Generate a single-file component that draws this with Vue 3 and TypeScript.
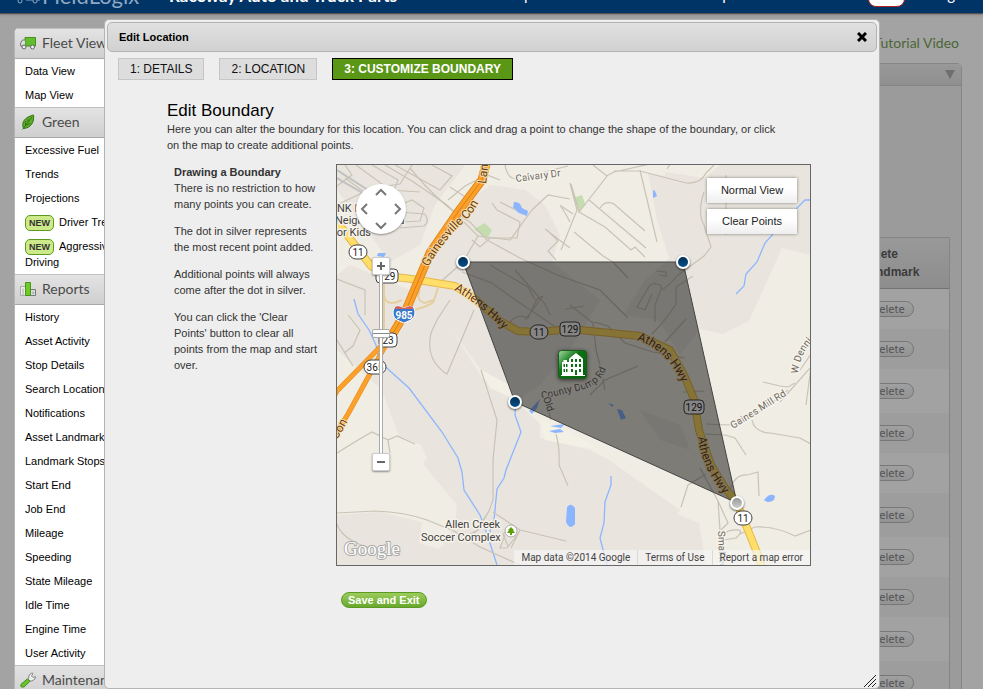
<script setup lang="ts">
import { ref } from 'vue'

interface MenuItem { label: string; isNew?: boolean }
interface MenuGroup { title: string; icon: 'truck' | 'leaf' | 'chart' | 'wrench'; items: MenuItem[] }
interface Shield { x: number; y: number; text: string; us?: boolean }

const plain = (...labels: string[]): MenuItem[] => labels.map((label) => ({ label }))

const groups: MenuGroup[] = [
  { title: 'Fleet View', icon: 'truck', items: plain('Data View', 'Map View') },
  {
    title: 'Green',
    icon: 'leaf',
    items: [
      ...plain('Excessive Fuel', 'Trends', 'Projections'),
      { label: 'Driver Trends', isNew: true },
      { label: 'Aggressive Driving', isNew: true },
    ],
  },
  {
    title: 'Reports',
    icon: 'chart',
    items: plain(
      'History', 'Asset Activity', 'Stop Details', 'Search Locations', 'Notifications',
      'Asset Landmarks', 'Landmark Stops', 'Start End', 'Job End', 'Mileage', 'Speeding',
      'State Mileage', 'Idle Time', 'Engine Time', 'User Activity',
    ),
  },
  { title: 'Maintenance', icon: 'wrench', items: [] },
]

const tabs = ['1: DETAILS', '2: LOCATION', '3: CUSTOMIZE BOUNDARY']
const activeTab = ref(2)
const zoomLevel = ref(68)

const boundary = [
  { x: 463, y: 262 },
  { x: 683, y: 262 },
  { x: 737, y: 503 },
  { x: 515, y: 402 },
]
const lastAdded = 2
const boundaryPoints = boundary.map((p) => `${p.x},${p.y}`).join(' ')

const shields: Shield[] = [
  { x: 358, y: 252, text: '11' },
  { x: 387, y: 276, text: '129', us: true },
  { x: 388, y: 340, text: '23', us: true },
  { x: 375, y: 367, text: '365' },
  { x: 743, y: 518, text: '11' },
]
const coveredShields: Shield[] = [
  { x: 539, y: 332, text: '11' },
  { x: 570, y: 329, text: '129', us: true },
  { x: 694, y: 407, text: '129', us: true },
]

const minorRoads = [
  'M337 186L352 175L345 165M337 205L372 188L400 184L412 165M345 178L375 200M356 165L390 190L420 192M372 165L398 180L392 196M395 165L440 190L452 176L432 165',
  'M400 205L412 200L424 208L420 221L402 222M398 212L425 214Q430 222 424 226L400 228M410 168Q440 205 470 222L487 240L520 258L560 276L600 290L628 318',
  'M385 165L412 181L447 205L478 236L463 262L438 284M448 200L465 186L487 175L500 180M450 187L470 200L455 215',
  'M492 203L497 210L520 222L517 238L490 238L480 247L472 240M500 202L516 210M505 165Q508 182 520 178L568 166',
  'M570 199L548 195L532 210L510 240L478 236M560 205Q566 214 570 222M547 230L558 241L548 251L556 260M545 229L570 248',
  'M570 183L577 210L561 250M571 184Q576 200 579 212L608 175L614 172L650 164M607 176L593 165M614 171L640 171L686 183Q701 184 706 173L714 165',
  'M640 170L657 242M667 169L673 160M589 200L646 248M600 208Q605 200 614 204L645 231M579 212L605 227L631 250L635 247L645 257M574 232L603 256L613 262L628 278M573 214L561 206',
  'M704 192Q697 213 704 225L711 247L704 256L677 276Q671 284 662 290M726 175V235',
  'M462 272L492 283L514 299L560 330M490 265L528 287L535 300M515 270L545 304L550 315M510 322Q518 313 528 318L537 299L543 296L525 320M565 309L584 306M570 305L593 323L596 350L600 365L605 390',
  'M656 271L666 272L666 276L659 275M656 283L650 285L637 307L645 310L652 294M655 284Q664 284 660 292L655 305L655 322M693 276L676 287L676 304Q666 320 652 334M686 319L665 342M594 322L608 326L625 343L653 352L685 358',
  'M450 300L437 320L431 333Q425 360 447 374L474 310M481 370L497 420L493 460V500L489 511L478 530L468 535M493 512L520 530L566 541M489 511L470 540',
  'M337 453L358 440L372 432L388 440L390 453M388 440L397 436L415 444M337 513L375 511Q405 512 427 520L454 531L480 547L520 565M337 524Q342 540 370 548',
  'M505 535L500 548L507 548L517 535M513 528L503 534L508 546M520 530L511 548M337 340L353 366M337 279L365 290L365 315M348 315L360 330L353 346L344 353',
  'M556 434Q560 448 559 465L568 486M548 408L551 420M550 395L549 403M590 395L605 380L638 366',
  'M706 424L729 425M706 434L725 435L735 438L746 455M752 420Q754 432 770 433L800 438L811 444M763 382L780 386L788 387L795 383M681 507L688 485L706 474',
  'M700 468L718 501L728 523L721 530M718 501L720 530L724 565M730 490Q735 474 747 475L758 472L759 496M740 534L755 527Q775 526 795 536L811 530M724 540L736 538Q748 527 728 531L722 536',
  'M683 392L704 391M811 354L800 370M780 402L811 367L806 405M788 390L778 398L754 416L729 425',
]
</script>

<template>
  <div class="page">
    <header class="topbar">
      <span class="brand">
        <svg class="brand-truck" viewBox="0 0 28 14" aria-hidden="true">
          <path d="M1 10V2H8M10 10V0H26V10H23M19 10H12" /><circle cx="6" cy="11" r="2" /><circle cx="21" cy="11" r="2" />
        </svg>
        <span class="brand-name">FieldLogix</span>
      </span>
      <strong class="company">Raceway Auto and Truck Parts</strong>
      <a class="toplink map-link" href="#">Map</a>
      <a class="toplink help" href="#">Help</a>
      <span class="alerts"></span>
      <a class="toplink" href="#">Log</a>
    </header>

    <div class="body">
      <nav class="sidebar" aria-label="Main menu">
        <section v-for="group in groups" :key="group.title">
          <h2 class="group-title">
            <svg v-if="group.icon === 'truck'" class="icon" viewBox="0 0 16 16" aria-hidden="true">
              <path d="M5 2.5H15.5V11H5Z" fill="#63bd2e" stroke="#479019" />
              <path d="M5 5H2.5L.6 8V11H5" fill="#ddd" stroke="#777" />
              <circle cx="4" cy="12" r="2" fill="#eee" stroke="#666" /><circle cx="12.5" cy="12" r="2" fill="#eee" stroke="#666" />
            </svg>
            <svg v-else-if="group.icon === 'leaf'" class="icon" viewBox="0 0 16 16" aria-hidden="true">
              <path d="M13.500 1C14.500 8 11 14 3.500 14.500C1 8 5 3 13.500 1Z" fill="#5fac2b" stroke="#347716" />
              <path d="M2.500 15.500L12 3M5.500 11V7M6 11L10.500 9.500M8 8V5" fill="none" stroke="#2b6814" stroke-width=".8" />
            </svg>
            <svg v-else-if="group.icon === 'chart'" class="icon" viewBox="0 0 16 16" aria-hidden="true">
              <path d="M.5 5.5H5.500V14.500H.5Z" fill="#eee" stroke="#aaa" />
              <path d="M2 7.500H4V14H2Z" fill="#ccc" />
              <path d="M10.500 8.500H15.500V14.500H10.500Z" fill="#ddd" stroke="#777" />
              <path d="M12.500 10.500H14V13H12.500Z" fill="#aaa" />
              <path d="M5.500 1.500H10.500V14.500H5.500Z" fill="#6dcb27" stroke="#4b941b" />
            </svg>
            <svg v-else class="icon" viewBox="0 0 16 16" aria-hidden="true">
              <path d="M8.500 7.500L9 3L12 .8L13 1.500L11.500 4L13 5.500L15.400 4.500L15 7L12 9L9 8.800Z" fill="#eee" stroke="#888" />
              <path d="M7.500 6.800L10 9.300L4 15L1.200 15L.8 12.500Z" fill="#65c42b" stroke="#478f1d" />
            </svg>
            {{ group.title }}
          </h2>
          <ul v-if="group.items.length" class="menu">
            <li v-for="item in group.items" :key="item.label">
              <a href="#"><span v-if="item.isNew" class="new">NEW</span>{{ item.label }}</a>
            </li>
          </ul>
        </section>
      </nav>

      <main class="backdrop">
        <a class="tutorial" href="#">Tutorial Video</a>
        <section class="panel">
          <div class="panel-head"><span class="caret"></span></div>
          <div class="panel-body">
            <table class="landmarks">
              <thead>
                <tr><th></th><th class="del-col">Delete Landmark</th></tr>
              </thead>
              <tbody>
                <tr v-for="n in 10" :key="n">
                  <td></td>
                  <td><button type="button" class="delete">Delete</button></td>
                </tr>
              </tbody>
            </table>
          </div>
        </section>
      </main>
    </div>

    <div class="dialog" role="dialog" aria-labelledby="dialog-title">
      <div class="titlebar">
        <h1 id="dialog-title">Edit Location</h1>
        <button type="button" class="close" aria-label="Close">
          <svg viewBox="0 0 10 10"><path d="M1 1L9 9M9 1L1 9" /></svg>
        </button>
      </div>
      <div class="tabs">
        <button
          v-for="(tab, i) in tabs"
          :key="tab"
          type="button"
          class="tab"
          :class="{ active: i === activeTab }"
          @click="activeTab = i"
        >{{ tab }}</button>
      </div>
      <div class="content">
        <h2 class="heading">Edit Boundary</h2>
        <p class="intro">
          Here you can alter the boundary for this location. You can click and drag a point to change the shape of the boundary, or click<br />
          on the map to create additional points.
        </p>
        <div class="editor">
          <div class="help-text">
            <p><strong>Drawing a Boundary</strong><br />There is no restriction to how many points you can create.</p>
            <p>The dot in silver represents the most recent point added.</p>
            <p>Additional points will always come after the dot in silver.</p>
            <p>You can click the 'Clear Points' button to clear all points from the map and start over.</p>
          </div>
          <div class="map-col">
            <div class="map">
              <svg class="map-art" viewBox="337 165 473 400" preserveAspectRatio="xMidYMid slice" aria-label="Map">
                <defs>
                  <path id="p-gaines" d="M428 267Q445 238 467 219Q479 207 485 186" />
                  <path id="p-lanier" d="M486 184L490 150" />
                  <path id="p-con" d="M337 440L356 407" />
                  <path id="p-ath1" d="M454 290Q478 303 504 330" />
                  <path id="p-ath2" d="M637 340Q668 350 683 386" />
                  <path id="p-ath3" d="M698 437Q701 468 727 498" />
                  <path id="p-county" d="M542 399L577 391Q602 386 607 365" />
                  <path id="p-gmill" d="M733 429L800 387" />
                  <path id="p-denn" d="M798 374Q800 350 820 334" />
                  <path id="p-calv" d="M516 182L570 175" />
                  <linearGradient id="dot" x2="0" y2="1"><stop stop-color="#003057" /><stop offset="1" stop-color="#07508a" /></linearGradient>
                  <linearGradient id="dot-last" x2="0" y2="1"><stop stop-color="#999" /><stop offset="1" stop-color="#ccc" /></linearGradient>
                  <linearGradient id="pin" x2="1" y2="1"><stop stop-color="#a5dba5" /><stop offset=".4" stop-color="#0c7413" /><stop offset="1" stop-color="#075d10" /></linearGradient>
                </defs>

                <path d="M337 165H810V565H337Z" fill="#f0ede4" />
                <g fill="#e9e5de">
                  <path d="M337 165H465L435 205L420 245L390 262L337 190Z" />
                  <path d="M450 215L490 185L525 190L545 205L560 235L552 262L600 300L570 350L540 385L515 402L481 370L452 330L430 350L404 330L425 270Z" />
                  <path d="M648 173L665 176V172L705 178L720 165H810V255L782 248L749 321L723 334L700 329L680 355L658 320L623 315L645 280L669 258L657 220Z" />
                  <path d="M337 275L350 265L410 290L430 320L452 330L482 378L520 405L540 424V438L590 450L609 460L680 510L677 514L699 523L706 565H337V515L380 512L422 522L419 543L438 549L445 545L438 540L454 530L457 505L423 464L427 458L421 445L399 436L382 390L337 350Z" />
                  <path d="M640 410L680 425L690 450L660 440Z" />
                </g>
                <path d="M481 370L510 385L516 400L490 388Z M540 420L570 432L600 450L545 440Z" fill="#f3f0e6" />
                <path d="M474 229L485 223L492 230L487 239Z M573 198L582 195L585 204L580 211Z" fill="#c5dcae" />
                <g fill="#8bb6ff">
                  <path d="M514 202Q520 201 522 208L528 211L527 216L519 213L513 208Z" />
                  <path d="M653 190L655 191L657 196L653 198Z" />
                  <path d="M378 253H386L384 257L377 256Z" />
                  <path d="M764 500Q770 492 775 496L774 500Q768 504 764 500Z" />
                  <path d="M567 507Q571 502 575 508V524Q570 531 566 522Z" />
                  <path d="M529 411L540 399L537 408L532 414Z" />
                  <path d="M550 426L565 424L561 428ZM549 431L560 429L564 432L555 433Z" />
                  <path d="M608 403L614 405L612 407ZM617 409L622 410L626 418L621 420Z" />
                </g>
                <path d="M354 299L358 314L369 330L376 345L379 360L390 371L409 388L442 432L458 458L462 472L464 490L480 515L487 534L497 565M516 395L515 415L521 432L506 470L504 478L497 489L494 520L488 537M611 476L611 485L605 502L604 523L600 538L607 565M811 200H805L796 209M773 234L765 243L757 262L746 274L744 286L736 294" class="river" />
                <g class="roads"><path v-for="d in minorRoads" :key="d" :d="d" /></g>
                <path d="M384 285V294Q385 308 402 300M420 290Q415 300 425 303L434 300L438 288M434 300Q433 305 417 309L395 321" class="ramp" />
                <path d="M384 283L384 330" class="ramp" />

                <path d="M337 170L371 192M337 178L366 195" stroke="#bfc0c0" stroke-width="2" />
                <path d="M335 219L354 244L371 266L386 276L412 279L455 286L475 299L500 321L518 331L540 332L570 329L640 336L670 350L684 375L694 399L699 430L711 465L725 488L737 503L758 555L762 568" class="highway-edge" />
                <path d="M335 219L354 244L371 266L386 276L412 279L455 286L475 299L500 321L518 331L540 332L570 329L640 336L670 350L684 375L694 399L699 430L711 465L725 488L737 503L758 555L762 568" class="highway" />
                <path d="M389 339L371 372L348 414L333 438M386 341L337 391L327 410" class="freeway-edge thin" />
                <path d="M389 339L371 372L348 414L333 438M386 341L337 391L327 410" class="freeway thin" />
                <path d="M487 160L482 180L458 212L430 253L404 315L386 345" class="freeway-edge" />
                <path d="M487 160L482 180L458 212L430 253L404 315L386 345" class="freeway" />
                <path d="M487 160L482 180L458 212L430 253L404 315L386 345" fill="none" stroke="#dd7d15" />

                <g class="road-name hwy-name">
                  <text><textPath href="#p-gaines">Gainesville Con</textPath></text>
                  <text><textPath href="#p-lanier">Lanier</textPath></text>
                  <text><textPath href="#p-con">Con</textPath></text>
                  <text><textPath href="#p-ath1">Athens Hwy</textPath></text>
                  <text><textPath href="#p-ath2">Athens Hwy</textPath></text>
                  <text><textPath href="#p-ath3">Athens Hwy</textPath></text>
                </g>
                <g class="road-name">
                  <text><textPath href="#p-county">County Dump Rd</textPath></text>
                  <text transform="translate(543 398) rotate(72)">Old</text>
                  <text><textPath href="#p-gmill">Gaines Mill Rd</textPath></text>
                  <text><textPath href="#p-denn">W Dennis</textPath></text>
                  <text><textPath href="#p-calv">Calvary Dr</textPath></text>
                  <text transform="translate(718 531) rotate(88)">Smallwood</text>
                </g>
                <g class="place">
                  <text x="337" y="212">NK Interactive</text>
                  <text x="335" y="224">Neighborhood</text>
                  <text x="333" y="236">for Kids</text>
                  <text x="445" y="528">Allen Creek</text>
                  <text x="421" y="541">Soccer Complex</text>
                </g>
                <circle cx="511" cy="531" r="6" fill="#fff" stroke="#aaa" />
                <path d="M511 527L514 530L513 530L515 533H512V535H510V533H507L509 530H508Z" fill="#5e9e08" />

                <g v-for="s in coveredShields" :key="`${s.x}`" class="shield">
                  <rect :x="s.x - (s.us ? 10 : 9)" :y="s.y - 7" :width="s.us ? 20 : 18" height="14" :rx="s.us ? 4 : 7" />
                  <text :x="s.x" :y="s.y + 4">{{ s.text }}</text>
                </g>

                <polygon :points="boundaryPoints" class="boundary" />

                <g v-for="s in shields" :key="`${s.x}-${s.y}`" class="shield">
                  <rect :x="s.x - (s.text.length > 2 ? 11 : 9)" :y="s.y - 7" :width="s.text.length > 2 ? 22 : 18" height="14" :rx="s.us ? 4 : 7" />
                  <text :x="s.x" :y="s.y + 4">{{ s.text }}</text>
                </g>
                <path d="M394 308L398 306L404 308L410 306L414 308Q417 316 411 320L404 323L397 320Q391 316 394 308Z" fill="#3a78c9" stroke="#fff" />
                <path d="M395 307L398 306L404 308L410 306L413 307V309H395Z" fill="#d5605a" />
                <text x="404" y="319" class="interstate">985</text>

                <g class="pin">
                  <rect x="558.500" y="350.500" width="28" height="28" rx="3" />
                  <path d="M562 375V362H563.500V360H567V362H569V359L571 357L576 353L581 357L583 359V375H585V376H561V375Z" fill="#fff" />
                  <path d="M563.500 364H565V367H563.500ZM566 364H567.500V367H566ZM563.500 369H565V372H563.500ZM566 369H567.500V372H566ZM571 359H573V362H571ZM575 359H577V362H575ZM579 359H581V362H579ZM571 364H573V367H571ZM575 364H577V367H575ZM579 364H581V367H579ZM571 369H573V372H571ZM575 370H577V375H575ZM579 369H581V372H579Z" fill="#0b6d14" />
                </g>

                <g v-for="(p, i) in boundary" :key="i" class="vertex">
                  <circle :cx="p.x" :cy="p.y" r="7" fill="#fff" />
                  <circle :cx="p.x" :cy="p.y" r="5" :fill="i === lastAdded ? 'url(#dot-last)' : 'url(#dot)'" />
                </g>
                <text x="344" y="555" class="logo">Google</text>
              </svg>

              <div class="pan">
                <button type="button" class="up" aria-label="Pan up"><svg viewBox="0 0 12 8"><path d="M1 7L6 2L11 7" /></svg></button>
                <button type="button" class="left" aria-label="Pan left"><svg viewBox="0 0 12 8"><path d="M1 7L6 2L11 7" /></svg></button>
                <button type="button" class="right" aria-label="Pan right"><svg viewBox="0 0 12 8"><path d="M1 7L6 2L11 7" /></svg></button>
                <button type="button" class="down" aria-label="Pan down"><svg viewBox="0 0 12 8"><path d="M1 7L6 2L11 7" /></svg></button>
              </div>
              <div class="zoom">
                <button type="button" aria-label="Zoom in" @click="zoomLevel += 5"><svg viewBox="0 0 10 10"><path d="M1 5H9M5 1V9" /></svg></button>
                <input v-model.number="zoomLevel" type="range" min="0" max="100" aria-label="Zoom level" />
                <button type="button" aria-label="Zoom out" @click="zoomLevel -= 5"><svg viewBox="0 0 10 10"><path d="M1 5H9" /></svg></button>
              </div>
              <div class="map-actions">
                <button type="button">Normal View</button>
                <button type="button">Clear Points</button>
              </div>
              <div class="attribution">
                <span>Map data ©2014 Google</span><a href="#">Terms of Use</a><a href="#">Report a map error</a>
              </div>
            </div>
            <button type="button" class="save">Save and Exit</button>
          </div>
        </div>
      </div>
      <svg class="grip" viewBox="0 0 12 12" aria-hidden="true"><path d="M0 12L12 0M4 12L12 4M8 12L12 8" /></svg>
    </div>
  </div>
</template>

<style>
body { margin: 0; overflow: hidden; }
</style>

<style scoped>
* { box-sizing: border-box; }
.page {
  position: relative;
  height: 100vh;
  overflow: hidden;
  background: #a3a3a3;
  font: 11px/16px "Liberation Sans", Arial, sans-serif;
  color: #000;
}
a { color: inherit; text-decoration: none; }
button { font: inherit; color: inherit; cursor: pointer; }
h1, h2, p, ul { margin: 0; padding: 0; }

.topbar {
  display: flex;
  align-items: flex-end;
  height: 13px;
  padding: 0 28px 0 14px;
  overflow: hidden;
  background: #003466;
  box-shadow: 0 1px 1px #555, 0 2px 3px #888;
  color: #fff;
  font: 17px/34px Lato, sans-serif;
  white-space: nowrap;
}
.brand { display: flex; align-items: flex-end; width: 155px; color: #8fa9c3; }
.brand-truck { width: 28px; height: 23px; padding-bottom: 9px; fill: none; stroke: #8fa9c3; }
.brand-name { font-size: 22px; line-height: 34px; }
.company { flex: 1; }
.toplink { font-size: 15px; line-height: 38px; }
.map-link { margin-right: 167px; }
.help { margin-right: 137px; }
.alerts { width: 37px; height: 26px; margin: 0 27px 6px 0; border: 1px solid #b02020; border-radius: 8px; background: #fff; }

.body { display: flex; padding: 15px 21px 0 14px; }
.sidebar {
  flex: none;
  width: 138px;
  border: 1px solid #b5b5b5;
  border-top: 0;
  border-radius: 5px 5px 0 0;
  background: #fff;
  overflow: hidden;
}
.group-title {
  display: flex;
  align-items: center;
  gap: 6px;
  height: 31px;
  padding: 0 5px 2px;
  border-top: 1px solid #c0c0c0;
  border-bottom: 1px solid #a8a8a8;
  background: linear-gradient(#e3e3e3, #cfcfcf);
  color: #4a4a4a;
  font: 14px/28px Lato, sans-serif;
}
.icon { width: 16px; height: 16px; }
.menu { list-style: none; }
.menu li { padding: 4px 10px; }
.new {
  display: inline-block;
  margin: -1px 5px -1px 0;
  padding: 0 3px;
  border: 1px solid #5d9b1f;
  border-radius: 5px;
  background: #cdea8b;
  color: #333;
  font-size: 9px;
  font-weight: bold;
  line-height: 14px;
}

.backdrop { flex: 1; display: flex; flex-direction: column; }
.tutorial { align-self: flex-end; margin: 4px 3px 0 0; color: #4b6636; font: 14px/22px Lato, sans-serif; }
.panel { margin-top: 9px; border: 1px solid #868686; border-radius: 5px 5px 0 0; background: #9b9b9b; }
.panel-head {
  display: flex;
  align-items: center;
  justify-content: flex-end;
  height: 22px;
  padding-right: 6px;
  border-bottom: 1px solid #868686;
  background: linear-gradient(#999, #8f8f8f);
}
.caret { border: 5px solid transparent; border-top: 9px solid #6f6f6f; border-bottom: 0; }
.panel-body { padding: 151px 11px 0; }
.landmarks { width: 100%; border-collapse: separate; border-spacing: 0; border: 1px solid #858585; background: #a2a2a2; }
.landmarks th {
  height: 51px;
  padding: 0 10px;
  border-bottom: 1px solid #727272;
  background: linear-gradient(#999, #8d8d8d);
  color: #3b3b3b;
  font: bold 12px/18px "Liberation Sans", Arial, sans-serif;
  text-align: left;
}
.landmarks .del-col { width: 97px; }
.landmarks td { height: 40px; padding: 0 10px; }
.landmarks tr:nth-child(3n) td,
.landmarks tr:last-child td { height: 44px; }
.landmarks tbody tr:nth-child(even) { background: #9d9d9d; }
.delete {
  display: block;
  width: 52px;
  height: 16px;
  padding: 0;
  border: 1px solid #777;
  border-radius: 8px;
  background: linear-gradient(#a0a0a0, #939393);
  color: #555;
  font: 11px/14px "Noto Sans", sans-serif;
}

.dialog {
  position: absolute;
  top: 19px;
  right: 103px;
  left: 104px;
  min-height: calc(100vh - 19px);
  padding: 2px;
  border: 1px solid #b4b4b4;
  border-radius: 5px;
  background: #eee;
}
.titlebar {
  display: flex;
  align-items: center;
  justify-content: space-between;
  height: 30px;
  padding: 0 8px 0 11px;
  border: 1px solid #b3b3b3;
  border-radius: 5px;
  background: linear-gradient(#e0e0e0, #d1d1d1);
}
.titlebar h1 { font-size: 11px; line-height: 28px; }
.close { width: 12px; height: 16px; padding: 0; border: 0; background: none; }
.close svg { display: block; width: 10px; height: 10px; margin: 0 auto; stroke: #000; stroke-width: 3; }

.tabs { display: flex; gap: 15px; padding: 6px 11px 0; }
.tab {
  height: 22px;
  padding: 0 11px;
  border: 1px solid #c6c6c6;
  background: #ddd;
  color: #111;
  font-size: 12px;
  line-height: 20px;
}
.tab.active { border-color: #000; background: #5b9716; color: #fff; font-weight: bold; }

.content { padding: 20px 66px 0 60px; color: #333; }
.heading { color: #000; font-size: 17px; font-weight: normal; line-height: 21px; }
.intro { white-space: nowrap; }
.editor { display: flex; gap: 17px; padding: 11px 0 0 7px; }
.help-text { flex: none; display: flex; flex-direction: column; gap: 11px; width: 145px; }
.map-col { flex: 1; min-width: 0; }
.map { position: relative; height: 402px; border: 1px solid #666; overflow: hidden; }
.map-art { display: block; width: 100%; height: 100%; }

.river { fill: none; stroke: #8bb6ff; stroke-width: 1.3; }
.roads { fill: none; stroke: #c9c3b6; stroke-width: 1.2; }
.ramp { fill: none; stroke: #e5cf9f; stroke-width: 2; }
.highway-edge { fill: none; stroke: #e6b84c; stroke-width: 8; }
.highway { fill: none; stroke: #ffdf69; stroke-width: 6; }
.freeway-edge { fill: none; stroke: #e58a1c; stroke-width: 9; }
.freeway { fill: none; stroke: #fba029; stroke-width: 7; }
.freeway-edge.thin { stroke-width: 5; }
.freeway.thin { stroke-width: 4; }
.road-name, .place { font-family: Roboto, sans-serif; paint-order: stroke; stroke-linejoin: round; stroke: #f5f2ea; stroke-width: 3px; fill: #6b675e; }
.road-name { font-size: 10px; }
.hwy-name { font-size: 12px; fill: #6f3b10; stroke: #f5dfa8; stroke-width: 2px; }
.place { font-size: 11px; fill: #444; }
.shield rect { fill: #fff; stroke: #444; }
.shield text { font: 10px Roboto, sans-serif; text-anchor: middle; fill: #222; }
.interstate { font: bold 10px Roboto, sans-serif; text-anchor: middle; fill: #fff; }
.boundary { fill: rgba(0, 0, 0, 0.48); stroke: #444; stroke-width: 1; }
.pin { filter: drop-shadow(0 1px 2px rgba(0, 0, 0, 0.6)); }
.pin rect { fill: url(#pin); stroke: #1a5c1a; }
.vertex { filter: drop-shadow(0 1px 1px rgba(0, 0, 0, 0.6)); }
.logo { font: 19px "Liberation Serif", serif; fill: #fff; stroke: #aaa; stroke-width: 2px; paint-order: stroke; }

.pan {
  position: absolute;
  top: 19px;
  left: 19px;
  display: grid;
  grid-template: repeat(3, 1fr) / repeat(3, 1fr);
  width: 50px;
  height: 50px;
  border-radius: 50%;
  background: #fff;
  box-shadow: 0 1px 2px rgba(0, 0, 0, 0.4);
}
.pan button { display: flex; align-items: center; justify-content: center; padding: 0; border: 0; background: none; }
.pan svg { flex: none; width: 12px; height: 8px; fill: none; stroke: #777; stroke-width: 2; }
.up { grid-area: 1 / 2; }
.left { grid-area: 2 / 1; }
.left svg { transform: rotate(-90deg); }
.right { grid-area: 2 / 3; }
.right svg { transform: rotate(90deg); }
.down { grid-area: 3 / 2; }
.down svg { transform: rotate(180deg); }

.zoom { position: absolute; top: 92px; left: 35px; display: flex; flex-direction: column; width: 18px; }
.zoom button {
  display: flex;
  align-items: center;
  justify-content: center;
  height: 18px;
  padding: 0;
  border: 1px solid #ccc;
  border-radius: 2px;
  background: #fff;
  box-shadow: 0 1px 2px rgba(0, 0, 0, 0.4);
}
.zoom svg { width: 10px; height: 10px; stroke: #666; stroke-width: 2; }
.zoom input {
  width: 18px;
  height: 178px;
  margin: 0;
  appearance: none;
  writing-mode: vertical-lr;
  direction: rtl;
  background: linear-gradient(90deg, transparent 7px, #aaa 7px 8px, #fff 8px 10px, #aaa 10px 11px, transparent 11px);
}
.zoom input::-webkit-slider-thumb {
  appearance: none;
  width: 18px;
  height: 9px;
  border: 1px solid #aaa;
  border-radius: 2px;
  background: linear-gradient(#fff 3px, #888 3px 4px, #fff 4px);
}

.map-actions { position: absolute; top: 13px; right: 13px; display: grid; gap: 6px; }
.map-actions button {
  width: 90px;
  height: 25px;
  padding: 0 0 1px;
  border: 0;
  background: linear-gradient(#fff 40%, #eee);
  box-shadow: 0 0 3px rgba(0, 0, 0, 0.45);
  color: #222;
}
.attribution {
  position: absolute;
  right: 0;
  bottom: 0;
  display: flex;
  background: rgba(245, 245, 245, 0.7);
  color: #444;
  font: 10px/15px Roboto, sans-serif;
}
.attribution > * { padding: 0 7px; }
.attribution a { border-left: 1px solid #ddd9d2; }

.save {
  display: block;
  height: 16px;
  margin: 26px 0 0 5px;
  padding: 0 6px;
  border: 1px solid #5b9a22;
  border-radius: 8px;
  background: linear-gradient(#9ccc5c, #68a82c);
  color: #fff;
  font-weight: bold;
  line-height: 14px;
}
.grip { position: absolute; right: 3px; bottom: 1px; width: 12px; height: 12px; stroke: #222; }
</style>
